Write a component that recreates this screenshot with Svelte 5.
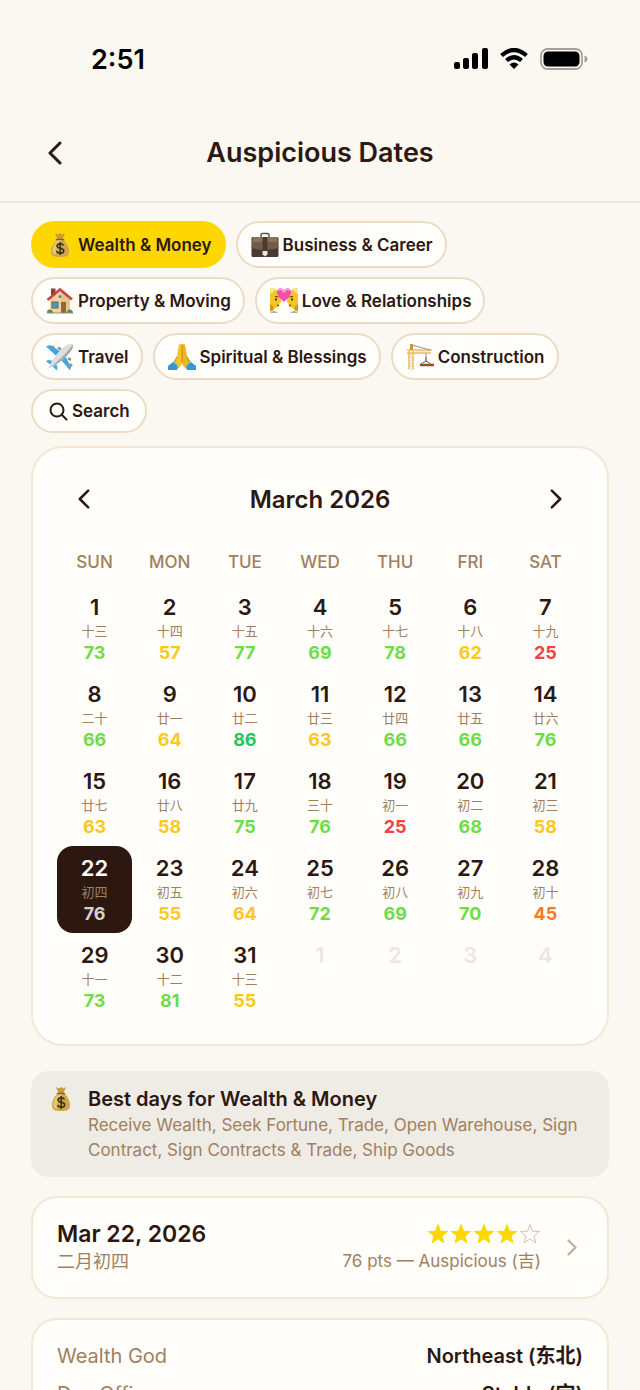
<script lang="ts">
	type Day = { day: number; lunar: string; score: number };

	const weekdays = ['SUN', 'MON', 'TUE', 'WED', 'THU', 'FRI', 'SAT'];

	const categories = [
		{ id: 'wealth', label: 'Wealth & Money' },
		{ id: 'business', label: 'Business & Career' },
		{ id: 'property', label: 'Property & Moving' },
		{ id: 'love', label: 'Love & Relationships' },
		{ id: 'travel', label: 'Travel' },
		{ id: 'spiritual', label: 'Spiritual & Blessings' },
		{ id: 'construction', label: 'Construction' }
	];

	const lunarDays =
		'十三 十四 十五 十六 十七 十八 十九 二十 廿一 廿二 廿三 廿四 廿五 廿六 廿七 廿八 廿九 三十 初一 初二 初三 初四 初五 初六 初七 初八 初九 初十 十一 十二 十三'.split(' ');
	const scores = [
		73, 57, 77, 69, 78, 62, 25, 66, 64, 86, 63, 66, 66, 76, 63, 58, 75, 76, 25, 68, 58, 76, 55, 64, 72, 69, 70, 45,
		73, 81, 55
	];

	const days: Day[] = scores.map((score, i) => ({ day: i + 1, lunar: lunarDays[i], score }));
	const nextMonth = [1, 2, 3, 4];

	const details = [
		{ label: 'Wealth God', value: 'Northeast (东北)' },
		{ label: 'Day Officer', value: 'Stable (定)' }
	];

	let category = $state('wealth');
	let selected = $state(22);

	function level(score: number) {
		if (score >= 85) return 'great';
		if (score >= 65) return 'good';
		if (score >= 50) return 'fair';
		if (score >= 40) return 'poor';
		return 'bad';
	}
</script>

{#snippet emoji(id: string)}
	<svg class="emoji" viewBox="0 0 28 28" aria-hidden="true">
		{#if id === 'wealth'}
			<path d="M9 2l3 1.500 2-1.500 2 1.500 3-1.500-2.500 6h-5z" fill="#c79a3a" />
			<path d="M11 8h6c4 4 6.500 9 6 13-.4 4-2.500 5-9 5s-8.600-1-9-5c-.5-4 2-9 6-13z" fill="#d0a646" />
			<path d="M11 9h5c-4 4-6.500 9-6 15-3-1-4-2-3.500-6 .5-3 2-6 4.500-9z" fill="#e6c670" />
			<path d="M10.500 8.500h7" stroke="#8a6423" stroke-width="1.600" stroke-linecap="round" />
			<path d="M17.500 14.500c-.6-1.300-1.800-1.800-3.300-1.800-1.900 0-3.200.9-3.200 2.300 0 3.200 6.700 1.400 6.700 4.700 0 1.500-1.400 2.500-3.400 2.500-1.800 0-3.200-.7-3.700-2.200M14.200 11v13" fill="none" stroke="#33301f" stroke-width="1.500" />
		{:else if id === 'business'}
			<path d="M10 8V4Q10 2.500 11.500 2.500h5Q18 2.500 18 4V8" fill="none" stroke="#5c5550" stroke-width="1.500" />
			<rect x="0.500" y="6" width="27" height="20" rx="1.500" fill="#4a3a31" />
			<path d="M2 6h24l1.500 11q-13.500 4-27 0z" fill="#705c4a" />
			<path d="M2 6h24l.7 5H1.300z" fill="#8b735a" />
			<rect x="11.500" y="6" width="5" height="14" fill="#4d3b32" />
			<path d="M11.500 20h5v3.500L14 25.500l-2.500-2z" fill="#e9e6e2" />
		{:else if id === 'property'}
			<path d="M5 1.500h4.500v7H5z" fill="#8c3f35" />
			<path d="M4 12L15 4l9 8v14H4z" fill="#efd3a0" />
			<path d="M15 4l9 8v14h-9z" fill="#e6c48c" />
			<path d="M1.500 13L14 2.500 26 12.500" fill="none" stroke="#c8463c" stroke-width="2.600" />
			<rect x="6" y="15" width="6" height="6" fill="#3d9ed6" stroke="#7e5a37" />
			<rect x="15" y="15" width="5" height="11" fill="#8e6845" />
			<circle cx="14" cy="9.500" r="1.500" fill="#5a82a0" />
			<path d="M1 26q0-4 3-3.500 3 .5 3 3.500zM21 26q0-4 3-3.500 3 .5 3 3.500z" fill="#5a8c3c" />
			<path d="M1 26h26" stroke="#8f8f86" />
		{:else if id === 'love'}
			<path d="M0 1h28v25H0z" fill="#fffef5" />
			<path d="M0 2q3-1 6 1 5 3 4.500 9l1 3-2 1-.5 4-4 1-2 3-3 1z" fill="#f4c526" />
			<path d="M28 2q-3-1-6 1-5 3-4.500 9l-1 3 2 1 .5 4 4 1 2 3 3 1z" fill="#f4c526" />
			<path d="M0 1h5l-1 4-4 2zM28 1h-5l1 4 4 2z" fill="#f9e58c" />
			<path d="M0 17q3 1 4 5l-4 2zM28 17q-3 1-4 5l4 2z" fill="#d29a12" />
			<path d="M5 10q2-1 3 0M20 10q1-1 3 0M7 18.500l2-.5M19 18l2 .5" fill="none" stroke="#5b3d18" stroke-width="1.200" />
			<circle cx="6" cy="12.500" r="1.100" fill="#40260f" />
			<circle cx="22" cy="12.500" r="1.100" fill="#40260f" />
			<path d="M0 26q4-4 8 0zM28 26q-4-4-8 0z" fill="#a9adb1" />
			<path d="M14 15Q6 9 7 4q2-5 7-1 5-4 7 1 1 5-7 11z" fill="#f24fae" />
			<path d="M7 4q2-5 7-1 5-4 7 1l-4-1-3 3-3-3z" fill="#ff9bd1" />
		{:else if id === 'travel'}
			<path d="M17 10L4 2 0 3.500l12 11zM18 11l7 13-1 3.500-10-12z" fill="#41a5df" />
			<path d="M8 18l-6-1-2 1.500 6 4zM10 20l1.500 5-1 2.500-4.500-5z" fill="#41a5df" />
			<path d="M2 26Q9 10 20 2.500q5-3 7-1.500 1 2-2 7Q17 19 2 26z" fill="#dcdee1" />
			<path d="M4 24Q16 16 26.500 2q1.500 2-2 6.500Q17 19 4 24z" fill="#a6aab0" />
			<path d="M6 3l2 2M12 4.500l3 2M22 15.500l3 1M24 21l2 2" stroke="#8b929a" stroke-width="2.400" />
		{:else if id === 'spiritual'}
			<path d="M13.500 1Q11 0 10.500 4L9 13l-5 8 5 5q4-2 5-6V2z" fill="#f6c52a" />
			<path d="M14.500 1Q17 0 17.500 4L19 13l5 8-5 5q-4-2-5-6V2z" fill="#eeb51c" />
			<path d="M14 2v17M9 14l-3 6M19 14l3 6" stroke="#ad750b" stroke-width="0.700" />
			<path d="M0 23l5-4q4 1 5 5l-1 3H0zM28 23l-5-4q-4 1-5 5l1 3h9z" fill="#3696d4" />
			<path d="M5 19q4 1 5 5M23 19q-4 1-5 5" fill="none" stroke="#82c6ed" />
		{:else}
			<path d="M1 7h25M1 10h24M3 8v18M7 8v18" stroke="#e8bc63" stroke-width="1.500" />
			<path d="M3 13l4-3M3 13l4 3-4 3 4 3-4 3 4 3M9 7l3 3 3-3 3 3 3-3 3 3" fill="none" stroke="#edcd8a" />
			<path d="M4 1h3v6H4z" fill="#c79445" />
			<path d="M6 2l18 5M20 10v9" stroke="#9c9585" />
			<path d="M20 14v4l-5 3M20 18l5 3" fill="none" stroke="#65655f" />
			<path d="M14 22h14" stroke="#ba3a25" stroke-width="2.500" />
			<path d="M15 21.500h12" stroke="#52713a" stroke-dasharray="2 2" />
		{/if}
	</svg>
{/snippet}

{#snippet chevron(direction: 'left' | 'right')}
	<svg class="chevron" viewBox="0 0 14 24" aria-hidden="true">
		<path d={direction === 'left' ? 'M12 2L2 12l10 10' : 'M2 2l10 10L2 22'} />
	</svg>
{/snippet}

<div class="app">
	<div class="status-bar">
		<span>2:51</span>
		<div class="status-icons">
			<svg width="34" height="22" viewBox="0 0 34 22" aria-hidden="true">
				<rect x="0" y="14" width="6" height="7" rx="2" />
				<rect x="9" y="10" width="6" height="11" rx="2" />
				<rect x="18" y="5" width="6" height="16" rx="2" />
				<rect x="28" y="0" width="6" height="21" rx="2" />
			</svg>
			<svg width="30" height="22" viewBox="0 0 30 22" aria-hidden="true">
				<path d="M2.500 7.500Q15-3.500 27.500 7.500M7.500 12.500Q15 6 22.500 12.500" fill="none" stroke="#000" stroke-width="4.200" />
				<path d="M10.500 16.500Q15 12.500 19.500 16.500L15 21z" />
			</svg>
			<svg width="48" height="22" viewBox="0 0 48 22" aria-hidden="true">
				<rect x="1" y="1" width="41" height="20" rx="6.500" fill="none" stroke="#a5a09b" stroke-width="1.800" />
				<rect x="3.500" y="3.500" width="36" height="15" rx="4.500" />
				<path d="M44.500 7.500q3 1 3 3.500t-3 3.500z" fill="#a5a09b" />
			</svg>
		</div>
	</div>

	<header>
		<button class="back" aria-label="Back">{@render chevron('left')}</button>
		<h1>Auspicious Dates</h1>
	</header>

	<main>
		<div class="categories">
			{#each categories as c (c.id)}
				<button class="chip" class:active={category === c.id} onclick={() => (category = c.id)}>
					{@render emoji(c.id)}
					{c.label}
				</button>
			{/each}
			<button class="chip search">
				<svg width="19" height="19" viewBox="0 0 19 19" aria-hidden="true">
					<circle cx="8" cy="8" r="6.500" />
					<path d="M13 13l4.500 4.500" />
				</svg>
				Search
			</button>
		</div>

		<section class="card calendar">
			<div class="month">
				<button aria-label="Previous month">{@render chevron('left')}</button>
				<h2>March 2026</h2>
				<button aria-label="Next month">{@render chevron('right')}</button>
			</div>
			<div class="weekdays">
				{#each weekdays as w}
					<span>{w}</span>
				{/each}
			</div>
			<div class="days">
				{#each days as d (d.day)}
					<button class="day" class:selected={selected === d.day} onclick={() => (selected = d.day)}>
						<span class="number">{d.day}</span>
						<span class="lunar">{d.lunar}</span>
						<span class="score {level(d.score)}">{d.score}</span>
					</button>
				{/each}
				{#each nextMonth as n}
					<button class="day outside" disabled><span class="number">{n}</span></button>
				{/each}
			</div>
		</section>

		<section class="info">
			{@render emoji('wealth')}
			<div>
				<h3>Best days for Wealth &amp; Money</h3>
				<p>Receive Wealth, Seek Fortune, Trade, Open Warehouse, Sign Contract, Sign Contracts &amp; Trade, Ship Goods</p>
			</div>
		</section>

		<button class="card result">
			<span class="date">
				<strong>Mar 22, 2026</strong>
				<span class="lunar-date">二月初四</span>
			</span>
			<span class="rating">
				<span class="stars">
					{#each [1, 2, 3, 4, 5] as n}
						<svg class:empty={n > 4} viewBox="0 0 22 22" aria-hidden="true">
							<path d="M11 1.500l2.500 6.700 7.100.3-5.600 4.400 1.900 6.900-5.900-4-5.900 4L7 12.900 1.400 8.500l7.100-.3z" />
						</svg>
					{/each}
				</span>
				<span class="points">76 pts — Auspicious (吉)</span>
			</span>
			{@render chevron('right')}
		</button>

		<section class="card">
			<dl>
				{#each details as row}
					<div class="detail">
						<dt>{row.label}</dt>
						<dd>{row.value}</dd>
					</div>
				{/each}
			</dl>
		</section>
	</main>
</div>

<style>
	:global(body) {
		background: #fbf7f1;
	}

	.app {
		display: flex;
		flex-direction: column;
		height: 100vh;
		overflow: hidden;
		font-family: Inter, 'Noto Sans CJK SC', sans-serif;
		color: #2c1810;
	}

	h1,
	h2,
	h3,
	p,
	dl,
	dd {
		margin: 0;
	}

	button {
		padding: 0;
		border: none;
		background: none;
		font: inherit;
		color: inherit;
		cursor: pointer;
	}

	svg {
		display: block;
		flex-shrink: 0;
	}

	.status-bar {
		display: flex;
		flex-shrink: 0;
		justify-content: space-between;
		align-items: center;
		height: 104px;
		padding: 14px 52px 0 91px;
		box-sizing: border-box;
		font-size: 27px;
		font-weight: 600;
		color: #000;
	}

	.status-icons {
		display: flex;
		align-items: center;
		gap: 11px;
	}

	header {
		display: grid;
		flex-shrink: 0;
		grid-template-columns: 48px 1fr 48px;
		align-items: center;
		height: 97px;
		padding: 0 31px;
		border-bottom: 2px solid #f1e8d7;
	}

	h1 {
		font-size: 27px;
		font-weight: 600;
		text-align: center;
	}

	.chevron {
		width: 12px;
		height: 20px;
		fill: none;
		stroke: currentColor;
		stroke-width: 3;
		stroke-linecap: round;
		stroke-linejoin: round;
	}

	.back {
		display: grid;
		place-items: center;
		height: 48px;
	}

	.back .chevron {
		width: 14px;
		height: 24px;
	}

	main {
		flex: 1;
		min-height: 0;
		padding: 18px 31px;
		overflow-y: auto;
		scrollbar-width: none;
	}

	.categories {
		display: flex;
		flex-wrap: wrap;
		gap: 9px 10px;
		margin-bottom: 13px;
		padding-right: 16px;
	}

	.chip {
		display: flex;
		align-items: center;
		gap: 4px;
		height: 47px;
		padding: 0 12px 0 13px;
		border: 2px solid #ebdcc5;
		border-radius: 24px;
		background: #fffefa;
		font-size: 17px;
		font-weight: 600;
		white-space: nowrap;
	}

	.chip.active {
		border-color: #ffd700;
		background: #ffd700;
	}

	.chip.search {
		height: 44px;
		padding: 0 15px 0 16px;
	}

	.search svg {
		fill: none;
		stroke: currentColor;
		stroke-width: 2;
		stroke-linecap: round;
	}

	.emoji {
		width: 28px;
		height: 28px;
	}

	.card {
		display: block;
		box-sizing: border-box;
		width: 100%;
		padding: 24px;
		border: 2px solid #f3e8d5;
		border-radius: 26px;
		background: #fffefa;
	}

	.calendar {
		border-radius: 32px;
		margin-bottom: 25px;
	}

	.month {
		display: flex;
		justify-content: space-between;
		align-items: center;
		height: 54px;
	}

	.month button {
		display: grid;
		place-items: center;
		width: 54px;
		height: 54px;
	}

	h2 {
		font-size: 24px;
		font-weight: 600;
	}

	.weekdays,
	.days {
		display: grid;
		grid-template-columns: repeat(7, 1fr);
		text-align: center;
	}

	.weekdays {
		margin: 24px 0 11px;
		font-size: 17px;
		font-weight: 500;
		line-height: 24px;
		color: #a08060;
	}

	.day {
		display: flex;
		flex-direction: column;
		align-items: center;
		height: 87px;
		padding-top: 8px;
		border-radius: 16px;
	}

	.number {
		font-size: 22px;
		font-weight: 600;
		line-height: 28px;
	}

	.lunar {
		font-size: 13px;
		line-height: 20px;
		color: #a08060;
	}

	.score {
		font-size: 18px;
		font-weight: 700;
		line-height: 24px;
	}

	.great {
		color: #22c55e;
	}

	.good {
		color: #6edc46;
	}

	.fair {
		color: #fcc81c;
	}

	.poor {
		color: #fb7a1e;
	}

	.bad {
		color: #ef4444;
	}

	.selected {
		background: #2c1810;
		color: #fffefa;
	}

	.selected .score {
		color: #d8d2cc;
	}

	.outside {
		color: #ebe8e2;
		cursor: default;
	}

	.info {
		display: flex;
		gap: 13px;
		margin-bottom: 19px;
		padding: 14px 16px;
		border-radius: 18px;
		background: #efebe5;
	}

	h3 {
		font-size: 20px;
		font-weight: 600;
		line-height: 28px;
	}

	.info p {
		font-size: 17px;
		line-height: 25px;
		color: #a08060;
	}

	.result {
		display: flex;
		align-items: center;
		gap: 26px;
		margin-bottom: 19px;
		padding: 22px 30px 22px 24px;
		text-align: left;
	}

	.date,
	.rating {
		display: flex;
		flex-direction: column;
	}

	.date {
		flex: 1;
	}

	.date strong {
		font-size: 23px;
		font-weight: 600;
		line-height: 28px;
	}

	.lunar-date {
		font-size: 18px;
		line-height: 27px;
		color: #a08060;
	}

	.rating {
		align-items: flex-end;
	}

	.stars {
		display: flex;
		align-items: center;
		gap: 1px;
		height: 28px;
	}

	.stars svg {
		width: 22px;
		height: 22px;
		fill: #ffd700;
		stroke: #ffd700;
	}

	.stars .empty {
		fill: none;
		stroke: #d2c1b1;
	}

	.points {
		font-size: 17px;
		line-height: 27px;
		color: #a08060;
	}

	.result .chevron {
		width: 10px;
		height: 17px;
		color: #c3ad99;
	}

	.detail {
		display: flex;
		justify-content: space-between;
		font-size: 20px;
		line-height: 24px;
		padding-bottom: 14px;
	}

	dt {
		color: #a08060;
	}

	dd {
		font-weight: 600;
	}
</style>
